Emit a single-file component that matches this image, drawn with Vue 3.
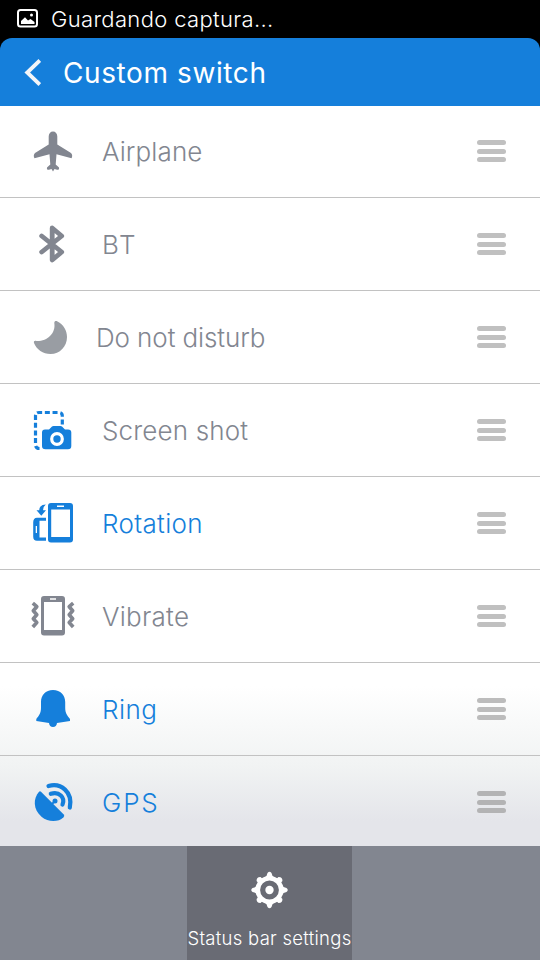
<script setup>
const rows = [
  { id: 'airplane', label: 'Airplane', spacing: 0.1 },
  { id: 'bt', label: 'BT', spacing: 1.6 },
  { id: 'moon', label: 'Do not disturb', spacing: -0.1 },
  { id: 'shot', label: 'Screen shot', spacing: 0.15 },
  { id: 'rotation', label: 'Rotation', on: true, spacing: 0.33 },
  { id: 'vibrate', label: 'Vibrate', spacing: 0.25 },
  { id: 'ring', label: 'Ring', on: true, spacing: 0.5 },
  { id: 'gps', label: 'GPS', on: true, spacing: 1.8 },
]
const teeth = [0, 90, 180, 270]
const knobs = [45, 135, 225, 315]
</script>

<template>
  <div class="screen">
    <div class="status">
      <svg class="picture" width="22" height="20" viewBox="0 0 22 20">
        <rect x="2" y="1" width="19" height="16.600" rx="2.500" fill="none" stroke="#fff" stroke-width="2" />
        <path d="M5 15V12L9 8.300L12 11.500L14.500 10L18.500 13V15Z" fill="#fff" />
        <circle cx="15.500" cy="6.100" r="1.500" fill="#fff" />
      </svg>
      <span class="status-text">Guardando captura...</span>
    </div>
    <header class="header">
      <svg class="back" width="21" height="30" viewBox="0 0 21 30">
        <path d="M19.800 2.500L7.200 14.500L19.800 26.500" fill="none" stroke="#f3f5f8" stroke-width="3.800" />
      </svg>
      <h1 class="title">Custom switch</h1>
    </header>
    <main class="list">
      <div v-for="r in rows" :key="r.id" class="row" :class="[r.id, { on: r.on }]">
        <svg class="icon" width="48" height="48" viewBox="0 0 48 48">
          <g v-if="r.id === 'airplane'" fill="currentColor">
            <path d="M25 3.500C22.500 3.500 20.700 5.500 20.700 8.500V16.500L7 25C5.500 26.500 5.500 28.500 6.500 30.300L21.500 26.300L22.300 36.500L19 39.500C18.600 41.300 19.500 42 21 41.700L23.500 41L25 43.500L26.500 41L29 41.700C30.500 42 31.400 41.300 31 39.500L27.700 36.500L28.500 26.300L43.500 30.300C44.500 28.500 44.500 26.500 43 25L29.300 16.500V8.500C29.300 5.500 27.500 3.500 25 3.500Z" />
          </g>
          <path v-else-if="r.id === 'bt'" d="M14 16L34 32L24.500 40V8L34 16L14 32" transform="translate(-.3 0)" fill="none" stroke="currentColor" stroke-width="4.800" stroke-linecap="round" stroke-linejoin="round" />
          <path v-else-if="r.id === 'moon'" d="M26.300 10C26.300 8 28 7.500 29.500 8.500C35.500 11.500 39 17.500 39 24C39 33.500 31.800 41 22.500 41C15 41 8.500 36.500 6 30C5.500 28.300 6.500 27.500 8.400 28C19 28.500 28 20.500 26.300 10Z" fill="#999da3" />
          <g v-else-if="r.id === 'shot'">
            <path d="M11.500 42.500Q7.500 42.500 7.500 38.500V10Q7.500 6.500 11 6.500H31Q34.300 6.500 34.300 10V18.500" fill="none" stroke="currentColor" stroke-width="3.200" stroke-dasharray="5 2.700" />
            <path d="M17 23.500H21L24 20.500Q24.500 20 25.500 20H32.500Q33.500 20 34 20.500L37 23.500H40Q43.300 23.500 43.300 26.500V40Q43.300 43.300 40 43.300H17.500Q14 43.300 14 40V26.500Q14 23.500 17 23.500Z" fill="currentColor" />
            <circle cx="29" cy="33" r="5.300" fill="none" stroke="#fff" stroke-width="3.200" />
          </g>
          <g v-else-if="r.id === 'rotation'">
            <path fill-rule="evenodd" d="M23 4H42Q45 4 45 7V40.500Q45 43.500 42 43.500H23Q20 43.500 20 40.500V7Q20 4 23 4ZM23.200 10.500V38H42V10.500ZM29 6.500V8H36V6.500Z" fill="currentColor" />
            <path fill-rule="evenodd" d="M18 18.800V21.800H11.500V38.500H18V41.800H9Q5.200 41.800 5.200 37.500V23.500Q5.200 18.800 9 18.800ZM7.700 27V34H9V27Z" fill="currentColor" />
            <path d="M17.800 5.500Q14 5.500 12.500 7.500Q11.200 9 11.300 11.300H8.500L13.300 16.800L18 11.300H15.200Q14.800 8 17.800 5.500Z" fill="currentColor" />
          </g>
          <g v-else-if="r.id === 'vibrate'">
            <path fill-rule="evenodd" d="M16 4H34Q37 4 37 7V40.500Q37 43.500 34 43.500H16Q13 43.500 13 40.500V7Q13 4 16 4ZM16 10V38H34V10ZM22 6.300V7.800H28V6.300Z" fill="currentColor" />
            <path d="M4.800 11.200L8.800 14.700L5.300 18.700L8.800 22.700L5.300 26.700L8.800 30.500L4.800 35M45.200 11.200L41.200 14.700L44.700 18.700L41.200 22.700L44.700 26.700L41.200 30.500L45.200 35" fill="none" stroke="currentColor" stroke-width="3.600" stroke-linejoin="round" />
          </g>
          <path v-else-if="r.id === 'ring'" d="M25 5C17.500 5 13 10 13 17V23C13 28 10.800 31 8.300 34V36L21 38C21.300 40.500 22.700 42 25 42C27.300 42 28.700 40.500 29 38L42 36V34C39.500 31 37.200 28 37.200 23V17C37.200 10 32.500 5 25 5Z" fill="currentColor" />
          <g v-else fill="none" stroke="currentColor">
            <path d="M13 14L36 37Q36.700 38.300 35.500 39.500C30.500 44.500 20.500 45 13.500 39C5 31.500 5 21 11 14Q12 13 13 14Z" transform="translate(0 -.3)" fill="currentColor" stroke="none" />
            <circle cx="27" cy="23" r="2.500" fill="currentColor" stroke="none" />
            <path d="M26 24L22 28" stroke-width="2" />
            <path d="M22.800 15.800C31 13 37.500 19.500 34.500 26.500" stroke-width="4.200" stroke-linecap="round" />
            <path d="M20.500 8C33 4.500 45 14 41.800 29.500" stroke-width="4.200" stroke-linecap="round" />
          </g>
        </svg>
        <span class="label" :style="{ letterSpacing: r.spacing + 'px' }">{{ r.label }}</span>
        <span class="handle"><i></i><i></i><i></i></span>
      </div>
    </main>
    <footer class="footer">
      <div class="settings">
        <svg width="38" height="38" viewBox="-18.5 -19 38 38">
          <circle r="11.700" fill="none" stroke="#fff" stroke-width="4.600" />
          <circle r="4.200" fill="#fff" />
          <path v-for="a in teeth" :key="a" :transform="`rotate(${a})`" d="M-5 -12.500Q-2.500 -13.500 -2 -17Q0 -19.500 2 -17Q2.500 -13.500 5 -12.500Z" fill="#fff" />
          <path v-for="a in knobs" :key="a" :transform="`rotate(${a})`" d="M-3 -12.500L-2.800 -15.500Q0 -18.500 2.800 -15.500L3 -12.500Z" fill="#fff" />
        </svg>
        <span class="settings-text">Status bar settings</span>
      </div>
    </footer>
  </div>
</template>

<style>
body { margin: 0; background: #000; }
</style>

<style scoped>
.screen {
  width: 540px;
  height: 960px;
  display: flex;
  flex-direction: column;
  overflow: hidden;
  background: #000;
  font-family: Inter, "Liberation Sans", sans-serif;
  font-weight: 300;
  white-space: nowrap;
}
.status { height: 38px; display: flex; align-items: center; box-sizing: border-box; padding-left: 16px; }
.picture { margin-right: 13px; }
.status-text { color: #fff; font-size: 22px; letter-spacing: 0.35px; }
.header {
  height: 68px;
  box-sizing: border-box;
  padding: 2px 0 0 20px;
  display: flex;
  align-items: center;
  background: #157fdb;
  border-radius: 12px 12px 0 0;
}
.title { margin: 0 0 0 22px; color: #fff; font-size: 28px; font-weight: 400; letter-spacing: 0.6px; }
.list {
  height: 740px;
  overflow: hidden;
  background: linear-gradient(#fff 0, #fff 580px, #f1f3f3 660px, #e4e5ea 715px, #e4e5ea 740px);
}
.row {
  height: 93px;
  box-sizing: border-box;
  border-bottom: 1px solid #c2c2c2;
  display: flex;
  align-items: center;
  padding: 0 34px 0 28px;
  color: #828690;
}
.row:first-child { height: 92px; }
.row:last-child { border-bottom-color: transparent; }
.on, .shot .icon { color: #157fdb; }
.icon { flex: none; }
.label { margin-left: 26px; padding-top: 2px; font-size: 26px; line-height: 40px; }
.row:first-child .label { padding-top: 1px; }
.moon .label { margin-left: 20px; }
.handle { margin-left: auto; display: grid; gap: 3.5px; }
.row:first-child .handle { padding-bottom: 1px; }
.handle i { width: 29px; height: 5px; border-radius: 2.5px; background: #c0c0c0; }
.ring .handle i { background: #bcbcbc; }
.gps .handle i { background: #b3b3b4; }
.footer { height: 114px; display: flex; padding-left: 187px; box-sizing: border-box; background: #828690; }
.settings {
  width: 165px;
  display: flex;
  flex-direction: column;
  align-items: center;
  padding-top: 25px;
  box-sizing: border-box;
  background: #696b74;
}
.settings-text { margin-top: 17px; color: #fff; font-size: 18.5px; line-height: 24px; letter-spacing: 0.28px; }
</style>
